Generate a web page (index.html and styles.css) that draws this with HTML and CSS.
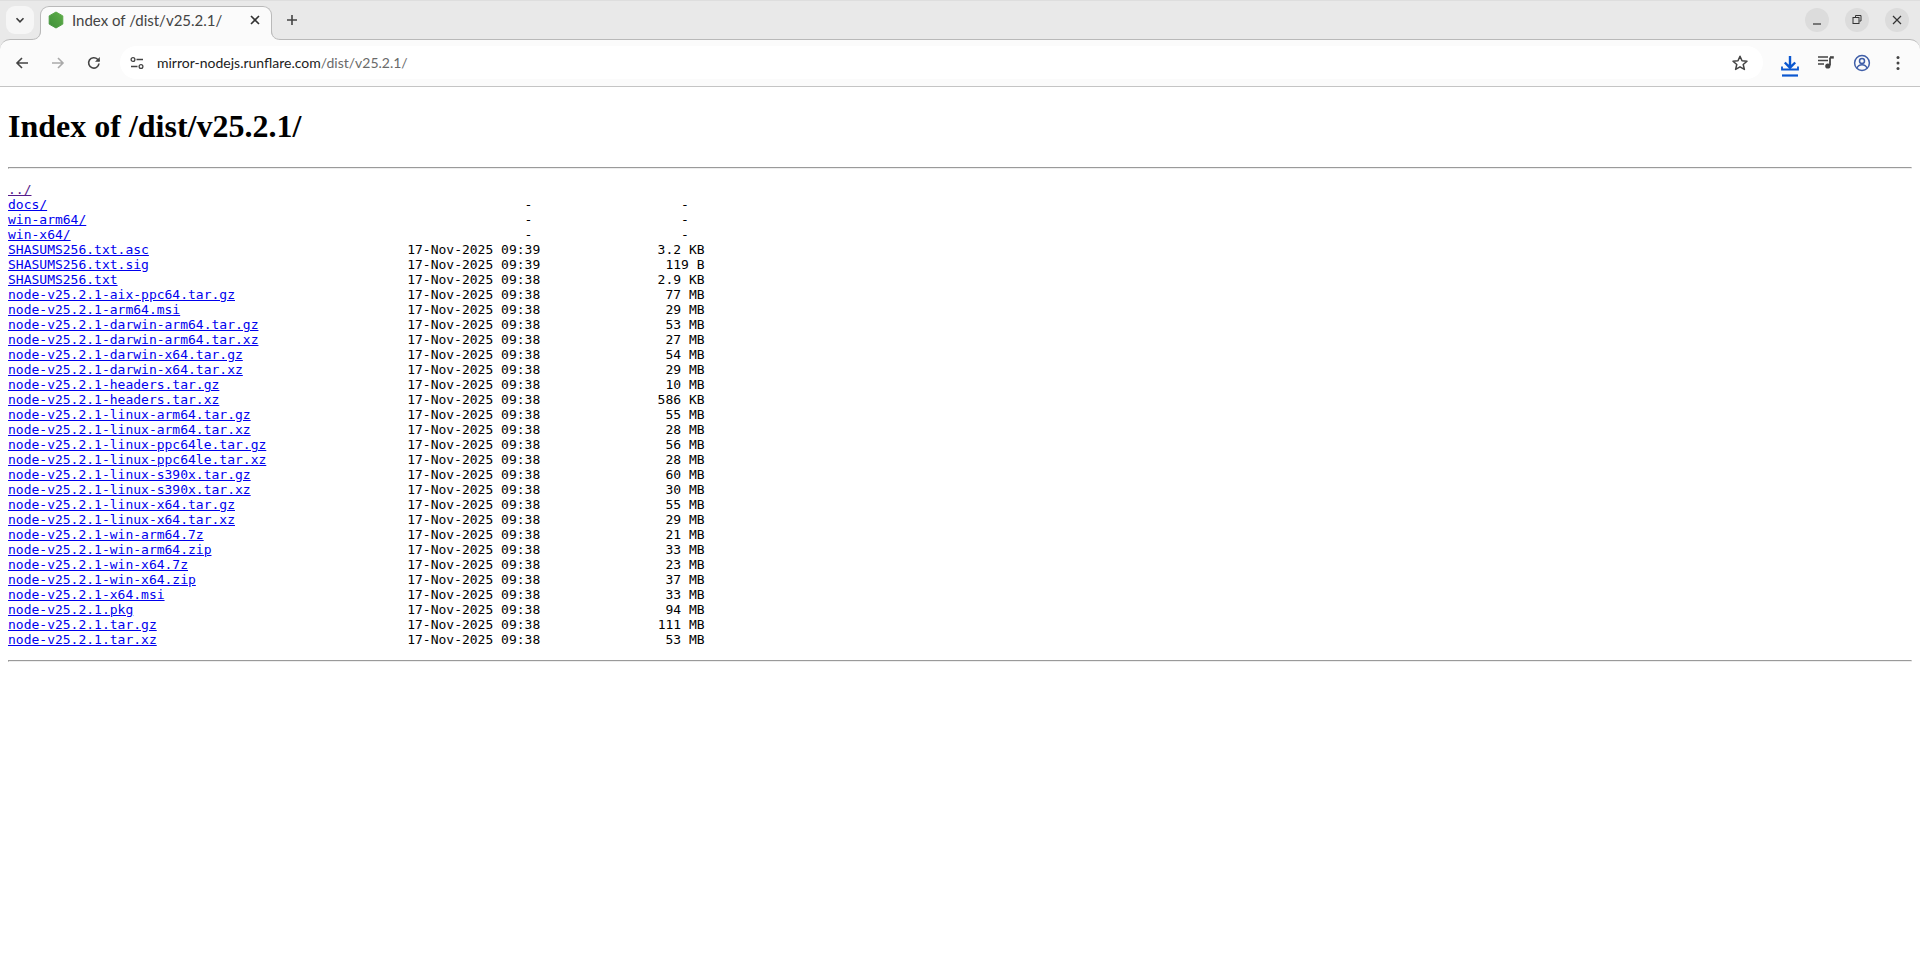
FILE: index.html

```html
<!DOCTYPE html>
<html lang="en">
<head>
  <meta charset="UTF-8">
  <title>Index of /dist/v25.2.1/</title>
  <link rel="stylesheet" href="styles.css">
</head>
<body>

  <div class="browser">
    <div class="tabstrip">
      <button class="tab-search">
        <svg width="12" height="12" viewBox="0 0 12 12"><path d="M2.5 4.2 6 7.8l3.5-3.6" fill="none" stroke="#3c3c3c" stroke-width="1.6"/></svg>
      </button>
      <div class="tab">
        <svg class="tab-flare flare-left" width="10" height="10" viewBox="0 0 10 10"><path d="M10 0C10 6 7 9.5 0 9.5V10h10z" fill="#fbfbfb"/><path d="M9.5 0C9.5 6 7 9.5 0 9.5" fill="none" stroke="#b9b9b9"/></svg>
        <svg class="tab-flare flare-right" width="10" height="10" viewBox="0 0 10 10"><path d="M0 0C0 6 3 9.5 10 9.5V10H0z" fill="#fbfbfb"/><path d="M.5 0C.5 6 3 9.5 10 9.5" fill="none" stroke="#b9b9b9"/></svg>
        <svg class="favicon" width="16" height="18" viewBox="0 0 16 18">
          <defs><linearGradient id="nodeGreen" x1="0" y1="1" x2="1" y2="0"><stop offset="0" stop-color="#3f8f3a"/><stop offset="1" stop-color="#5fae49"/></linearGradient></defs>
          <path d="M8 1l6.8 3.9v8.2L8 17l-6.800-3.900V4.900z" fill="url(#nodeGreen)" stroke="url(#nodeGreen)" stroke-linejoin="round"/>
        </svg>
        <span class="tab-title">Index of /dist/v25.2.1/</span>
        <svg class="tab-close" width="12" height="12" viewBox="0 0 12 12"><path d="M2 2l8 8M10 2l-8 8" stroke="#333" stroke-width="1.6"/></svg>
      </div>
      <button class="new-tab">
        <svg width="12" height="12" viewBox="0 0 12 12"><path d="M6 1v10M1 6h10" stroke="#444" stroke-width="1.6"/></svg>
      </button>
      <div class="window-controls">
        <button class="win-btn"><svg width="12" height="12" viewBox="0 0 12 12"><path d="M2 10h8" stroke="#333" stroke-width="1.2"/></svg></button>
        <button class="win-btn"><svg width="12" height="12" viewBox="0 0 12 12"><path d="M4.5 3V1.500H10V7H8.500" fill="none" stroke="#333"/><rect x="2" y="3.500" width="6" height="6" fill="none" stroke="#333"/></svg></button>
        <button class="win-btn"><svg width="12" height="12" viewBox="0 0 12 12"><path d="M2 2l8 8M10 2l-8 8" stroke="#333" stroke-width="1.2"/></svg></button>
      </div>
    </div>

    <div class="toolbar">
      <button class="nav-btn">
        <svg width="16" height="16" viewBox="0 0 16 16"><path d="M14 8H3M8 3 3 8l5 5" fill="none" stroke="#444" stroke-width="1.6"/></svg>
      </button>
      <button class="nav-btn">
        <svg width="16" height="16" viewBox="0 0 16 16"><path d="M2 8h11M8 3l5 5-5 5" fill="none" stroke="#aaa" stroke-width="1.6"/></svg>
      </button>
      <button class="nav-btn">
        <svg width="16" height="16" viewBox="0 0 16 16"><path d="M13 8.500A5.200 5.200 0 1 1 11.600 4.300L13.300 6" fill="none" stroke="#444" stroke-width="1.6"/><path d="M13.800 2v4.800H9z" fill="#444"/></svg>
      </button>
      <div class="omnibox">
        <span class="site-icon">
          <svg width="14" height="14" viewBox="0 0 14 14"><circle cx="3" cy="3.500" r="1.900" fill="none" stroke="#444" stroke-width="1.3"/><path d="M6.500 3.500H13M1 10.500h6.500" stroke="#444" stroke-width="1.4"/><circle cx="11" cy="10.500" r="1.900" fill="none" stroke="#444" stroke-width="1.3"/></svg>
        </span>
        <span class="url"><span class="url-host">mirror-nodejs.runflare.com</span>/dist/v25.2.1/</span>
        <svg class="star" width="18" height="18" viewBox="0 0 18 18"><path d="M9 2.200l2 4.600 5 .4-3.800 3.300 1.200 4.900L9 12.800l-4.400 2.600 1.200-4.900L2 7.200l5-.4z" fill="none" stroke="#444" stroke-width="1.5" stroke-linejoin="round"/></svg>
      </div>
      <button class="nav-btn download-btn">
        <svg width="18" height="22" viewBox="0 0 18 22"><path d="M9 1v11M3.800 7.500 9 12.700l5.200-5.200" fill="none" stroke="#0b57d0" stroke-width="2.400"/><path d="M1 11.500V14.500H17V11.500" fill="none" stroke="#0b57d0" stroke-width="1.800"/><path d="M1 20.500h16" stroke="#0b57d0" stroke-width="2.200"/></svg>
      </button>
      <button class="nav-btn">
        <svg width="16" height="13" viewBox="0 0 16 13"><path d="M0 1h10M0 4.500h10M0 8h6" stroke="#444" stroke-width="1.3"/><path d="M12 1.500v8" stroke="#444" stroke-width="1.8"/><path d="M12 .2h3.800v2.400H12z" fill="#444"/><circle cx="9.800" cy="10" r="2.600" fill="#444"/></svg>
      </button>
      <button class="nav-btn">
        <svg width="18" height="18" viewBox="0 0 18 18"><circle cx="9" cy="9" r="7.400" fill="none" stroke="#3f5ea8" stroke-width="1.5"/><circle cx="9" cy="7" r="2.500" fill="none" stroke="#3f5ea8" stroke-width="1.5"/><path d="M4 14c1-2.600 3-3.300 5-3.300s4 .7 5 3.300" fill="none" stroke="#3f5ea8" stroke-width="1.5"/></svg>
      </button>
      <button class="nav-btn">
        <svg width="16" height="16" viewBox="0 0 16 16"><circle cx="8" cy="2.500" r="1.500" fill="#444"/><circle cx="8" cy="8" r="1.500" fill="#444"/><circle cx="8" cy="13.500" r="1.500" fill="#444"/></svg>
      </button>
    </div>
  </div>

  <div class="page">
    <h1>Index of /dist/v25.2.1/</h1>
    <hr>
<pre><a href="#" class="visited">../</a>
<a href="#">docs/</a>                                                             -                   -  
<a href="#">win-arm64/</a>                                                        -                   -  
<a href="#">win-x64/</a>                                                          -                   -  
<a href="#">SHASUMS256.txt.asc</a>                                 17-Nov-2025 09:39               3.2 KB
<a href="#">SHASUMS256.txt.sig</a>                                 17-Nov-2025 09:39                119 B
<a href="#">SHASUMS256.txt</a>                                     17-Nov-2025 09:38               2.9 KB
<a href="#">node-v25.2.1-aix-ppc64.tar.gz</a>                      17-Nov-2025 09:38                77 MB
<a href="#">node-v25.2.1-arm64.msi</a>                             17-Nov-2025 09:38                29 MB
<a href="#">node-v25.2.1-darwin-arm64.tar.gz</a>                   17-Nov-2025 09:38                53 MB
<a href="#">node-v25.2.1-darwin-arm64.tar.xz</a>                   17-Nov-2025 09:38                27 MB
<a href="#">node-v25.2.1-darwin-x64.tar.gz</a>                     17-Nov-2025 09:38                54 MB
<a href="#">node-v25.2.1-darwin-x64.tar.xz</a>                     17-Nov-2025 09:38                29 MB
<a href="#">node-v25.2.1-headers.tar.gz</a>                        17-Nov-2025 09:38                10 MB
<a href="#">node-v25.2.1-headers.tar.xz</a>                        17-Nov-2025 09:38               586 KB
<a href="#">node-v25.2.1-linux-arm64.tar.gz</a>                    17-Nov-2025 09:38                55 MB
<a href="#">node-v25.2.1-linux-arm64.tar.xz</a>                    17-Nov-2025 09:38                28 MB
<a href="#">node-v25.2.1-linux-ppc64le.tar.gz</a>                  17-Nov-2025 09:38                56 MB
<a href="#">node-v25.2.1-linux-ppc64le.tar.xz</a>                  17-Nov-2025 09:38                28 MB
<a href="#">node-v25.2.1-linux-s390x.tar.gz</a>                    17-Nov-2025 09:38                60 MB
<a href="#">node-v25.2.1-linux-s390x.tar.xz</a>                    17-Nov-2025 09:38                30 MB
<a href="#">node-v25.2.1-linux-x64.tar.gz</a>                      17-Nov-2025 09:38                55 MB
<a href="#">node-v25.2.1-linux-x64.tar.xz</a>                      17-Nov-2025 09:38                29 MB
<a href="#">node-v25.2.1-win-arm64.7z</a>                          17-Nov-2025 09:38                21 MB
<a href="#">node-v25.2.1-win-arm64.zip</a>                         17-Nov-2025 09:38                33 MB
<a href="#">node-v25.2.1-win-x64.7z</a>                            17-Nov-2025 09:38                23 MB
<a href="#">node-v25.2.1-win-x64.zip</a>                           17-Nov-2025 09:38                37 MB
<a href="#">node-v25.2.1-x64.msi</a>                               17-Nov-2025 09:38                33 MB
<a href="#">node-v25.2.1.pkg</a>                                   17-Nov-2025 09:38                94 MB
<a href="#">node-v25.2.1.tar.gz</a>                                17-Nov-2025 09:38               111 MB
<a href="#">node-v25.2.1.tar.xz</a>                                17-Nov-2025 09:38                53 MB
</pre>
    <hr>
  </div>

</body>
</html>
```

FILE: styles.css

```css
body {
  margin: 0;
  background-color: white;
}
button {
  border: none;
  padding: 0;
  background: none;
  display: flex;
  align-items: center;
  justify-content: center;
}
.browser {
  font-family: Lato, "Noto Sans", sans-serif;
  background-color: #e9e9e9;
  height: 87px;
  display: flex;
  flex-direction: column;
}
.tabstrip {
  height: 39px;
  flex: none;
  box-sizing: border-box;
  display: flex;
  align-items: flex-end;
  padding-left: 6px;
  border-top: 1px solid #dedede;
}
.tab-search {
  width: 28px;
  height: 28px;
  margin-bottom: 5px;
  border-radius: 9px;
  background-color: #f6f6f6;
}
.tab {
  width: 232px;
  height: 34px;
  margin-left: 6px;
  margin-bottom: -1px;
  box-sizing: border-box;
  position: relative;
  z-index: 1;
  display: flex;
  align-items: center;
  padding: 0 10px 7px 7px;
  background-color: #fbfbfb;
  border: 1px solid #b9b9b9;
  border-bottom: none;
  border-radius: 9px 9px 0 0;
}
.tab-flare {
  position: absolute;
  bottom: 0;
}
.flare-left {
  left: -10px;
}
.flare-right {
  right: -10px;
}
.tab-title {
  flex: 1;
  margin-left: 8px;
  font-size: 15px;
  color: #444;
  white-space: nowrap;
}
.new-tab {
  width: 28px;
  height: 28px;
  margin-left: 6px;
  margin-bottom: 5px;
}
.window-controls {
  margin-left: auto;
  margin-bottom: 7px;
  margin-right: 11px;
  display: flex;
  gap: 16px;
}
.win-btn {
  width: 24px;
  height: 24px;
  border-radius: 50%;
  background-color: #dcdcdc;
}
.toolbar {
  flex: 1;
  display: flex;
  align-items: center;
  padding: 0 0 1px 4px;
  background-color: #fbfbfb;
  border-top: 1px solid #b9b9b9;
  border-bottom: 1px solid #c4c4c4;
  border-radius: 10px 10px 0 0;
}
.nav-btn {
  width: 36px;
  height: 34px;
  flex: none;
}
.download-btn {
  padding-top: 7px;
  box-sizing: border-box;
}
.omnibox {
  width: 1643px;
  height: 33px;
  margin: 0 9px 0 8px;
  flex: none;
  display: flex;
  align-items: center;
  background-color: white;
  border-radius: 17px;
  font-size: 14px;
}
.site-icon {
  width: 28px;
  height: 28px;
  margin-left: 3px;
  display: flex;
  align-items: center;
  justify-content: center;
}
.url {
  margin-left: 6px;
  color: #6a6a6a;
  flex: 1;
}
.url-host {
  color: #222;
}
.star {
  margin-right: 14px;
}
.page {
  padding: 0 8px;
}
h1 {
  font-family: "Liberation Serif", serif;
  font-size: 32px;
  font-weight: bold;
}
hr {
  margin: 8px 0;
}
pre {
  font-family: "DejaVu Sans Mono", monospace;
  font-size: 13px;
  margin: 13px 0;
}
.visited {
  color: #551a8b;
}
```
